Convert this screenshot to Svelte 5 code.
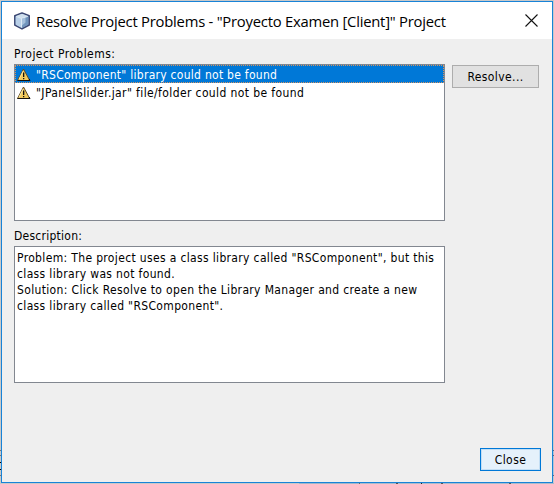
<script>
  const problems = [
    '"RSComponent" library could not be found',
    '"JPanelSlider.jar" file/folder could not be found'
  ];
  let selected = $state(0);
  const description = [
    'Problem: The project uses a class library called "RSComponent", but this',
    'class library was not found.',
    'Solution: Click Resolve to open the Library Manager and create a new',
    'class library called "RSComponent".'
  ];
</script>

<div class="desktop">
  <div class="ticks left"></div>
  <div class="window">
    <header>
      <svg class="cube" width="16" height="18" viewBox="0 0 16 18">
        <path d="M8 1 L15.2 3.8 V13 L8 16.9 L.8 13 V3.8Z" fill="#8caccc" stroke="#3a4672" stroke-width="1.5" stroke-linejoin="round" />
        <path d="M2 4 L8 1.8 L14 4 L7.5 6.2Z" fill="#cfdfed" />
        <path d="M1.7 4.5 L7.3 6.5 V15.8 L1.7 12.7Z" fill="#b9d0e8" />
        <path d="M7.7 6.5 L14.3 4.5 V12.7 L7.7 16Z" fill="#7195bd" />
        <path d="M8 6.7 L11.5 5.6 V10.5 L8 13.5Z" fill="#a5c0dc" />
        <path d="M2.2 4.4 L7.4 6.4 L13.8 4.4 M7.5 6.5 V15.7" fill="none" stroke="#f3faff" stroke-width=".8" />
      </svg>
      <h1>Resolve Project Problems - "Proyecto Examen [Client]" Project</h1>
      <svg class="x" width="13" height="13" viewBox="0 0 13 13"><path d="M.5 .5 L12.5 12.5 M12.5 .5 L.5 12.5" stroke="#111" stroke-width="1.1" /></svg>
    </header>
    <main>
      <label class="l1" for="list">Project Problems:</label>
      <div class="row">
        <div class="list" id="list" role="listbox" tabindex="-1">
          {#each problems as p, i}
            <div class="item" class:selected={selected === i} role="option" aria-selected={selected === i} tabindex="-1"
              onclick={() => (selected = i)} onkeydown={() => (selected = i)}>
              <svg width="14" height="14" viewBox="0 0 14 14">
                <path d="M6.5 1 L12.7 12.5 H.5Z" fill="#f2c95c" stroke="#5c4a28" stroke-width="1" stroke-linejoin="round" />
                <path d="M.5 12.5 H13 L12.2 11" fill="none" stroke="#15120c" stroke-width="1" />
                <path d="M6.2 3 L2 11.2" stroke="#fff0b0" stroke-width=".9" />
                <path d="M6 4.5h1.3v4.5H6z M6 10h1.3v1.3H6z" fill="#111" />
              </svg>
              <span class="t{i}">{p}</span>
            </div>
          {/each}
        </div>
        <button class="resolve">Resolve...</button>
      </div>
      <div class="l2">Description:</div>
      <div class="desc">
        {#each description as line}<div>{line}</div>{/each}
      </div>
      <footer><button class="close">Close</button></footer>
    </main>
  </div>
  <div class="ticks right"></div>
  <div class="under"></div>
</div>

<style>
  .desktop {
    position: relative; box-sizing: border-box; width: 554px; height: 484px; padding: 1px;
    background: #c9c9c9; overflow: hidden; color: #000;
    font: 12px/16px "DejaVu Sans Condensed", "DejaVu Sans", sans-serif; font-stretch: condensed;
    letter-spacing: .345px;
  }
  .window { box-sizing: border-box; width: 552px; height: 482px; border: 1px solid #1883d7; background: #efefef; }
  header { display: flex; align-items: center; height: 37px; background: #fff; }
  .cube { margin-left: 12px; flex: none; }
  h1 { margin: 0 0 0 6px; flex: 1; font: 400 14.8px/22px "Open Sans", sans-serif; letter-spacing: -.23px; white-space: nowrap; }
  .x { margin-right: 14px; flex: none; }
  main { display: flex; flex-direction: column; padding: 7px 12px 0; }
  .l1, .l2 { height: 16px; white-space: nowrap; }
  .l1 { letter-spacing: .45px; }
  .l2 { margin-top: 7px; letter-spacing: .25px; }
  .row { display: flex; gap: 7px; align-items: flex-start; margin-top: 2px; }
  .list, .desc { box-sizing: border-box; width: 431px; border: 1px solid #828790; background: #fff; flex: none; }
  .list { height: 157px; }
  .item { box-sizing: border-box; display: flex; align-items: center; height: 18px; padding: 1px 0 0 2px; white-space: nowrap; border: 0 dotted #d59461; }
  .item svg { flex: none; margin-right: 5px; }
  .item span { position: relative; top: .5px; }
  .selected { background: #0078d7; color: #fff; border-width: 1px; padding-left: 1px; }
  .t0 { letter-spacing: .275px; }
  .t1 { letter-spacing: .385px; }
  button { box-sizing: border-box; height: 23px; padding: 0; font: inherit; letter-spacing: .4px; color: #000; border: 1px solid #adadad; background: #e1e1e1; }
  .resolve { width: 87px; margin-top: 1px; }
  .desc { height: 137px; margin-top: 2px; padding: 3px 2px; white-space: nowrap; }
  footer { display: flex; justify-content: flex-end; margin: 65px -1px 0 0; }
  .close { width: 61px; border-color: #0078d7; background: #e5f1fb; box-shadow: inset 0 0 0 1px #c3def4; }
  .ticks { position: absolute; top: 450px; width: 1px; height: 26px; }
  .left { left: 0; background: linear-gradient(#777 1px, #c9c9c9 1px 5px, #777 5px 6px, #c9c9c9 6px 12px, #000 12px 13px, #c9c9c9 13px 19px, #000 19px 20px, #c9c9c9 20px 25px, #777 25px); }
  .right { right: 0; background: linear-gradient(#667 1px, #b4c4d2 1px 5px, #667 5px 6px, #b4c4d2 6px 25px, #667 25px); }
  .under {
    position: absolute; left: 0; top: 483px; width: 554px; height: 1px;
    background: linear-gradient(90deg, #c9c9c9 299px, #9fb8ca 299px 359px, #666 359px 360px, #aabccc 360px 396px, #555 396px 398px, #aabccc 398px 421px, #222 421px 422px, #aabccc 422px 441px, #555 441px 443px, #aabccc 443px 509px, #555 509px 511px, #aabccc 511px);
  }
</style>
